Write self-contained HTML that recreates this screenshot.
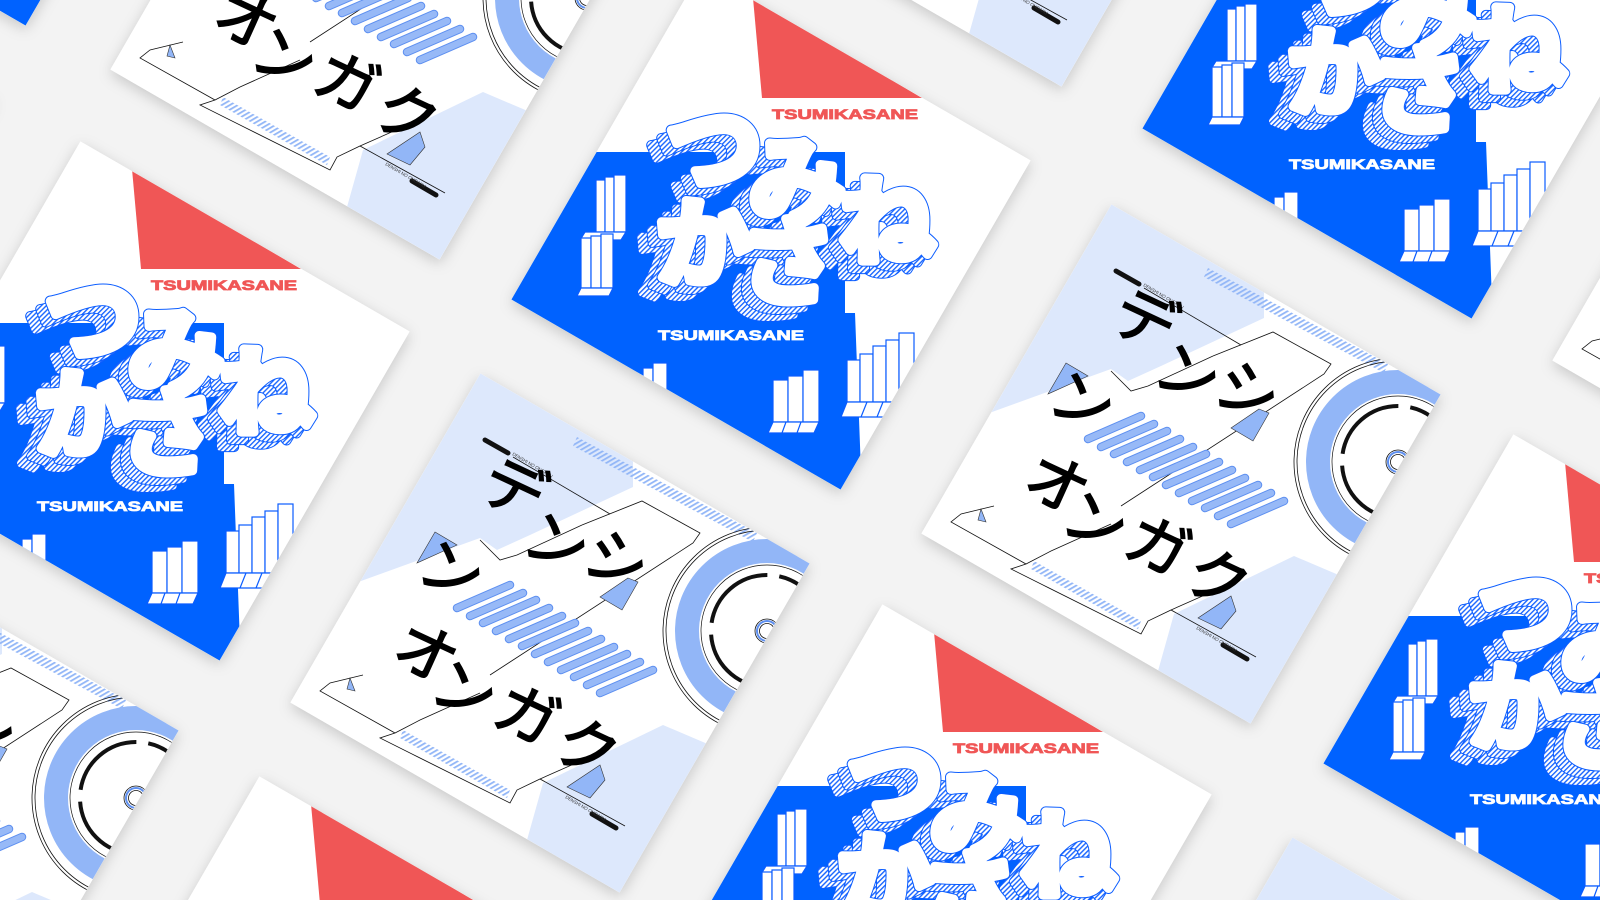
<!DOCTYPE html>
<html><head><meta charset="utf-8">
<style>
html,body{margin:0;padding:0;background:#f3f3f3;width:1600px;height:900px;overflow:hidden;}
svg{display:block;overflow:hidden;}
.jp{font-family:"Noto Sans CJK JP","WenQuanYi Zen Hei",sans-serif;}
.lat{font-family:"Liberation Sans",sans-serif;font-weight:bold;}
</style></head>
<body>
<svg width="1600" height="900" viewBox="0 0 1600 900" xmlns="http://www.w3.org/2000/svg">
<defs>
  <pattern id="hatch" patternUnits="userSpaceOnUse" width="3.5" height="3.5" patternTransform="rotate(45)">
    <rect width="3.5" height="3.5" fill="#fff"/>
    <rect width="1.4" height="3.5" fill="#1a66ff"/>
  </pattern>
  <pattern id="hatchL" patternUnits="userSpaceOnUse" width="4" height="4" patternTransform="rotate(60)">
    <rect width="1.8" height="4" fill="#92b6f7"/>
  </pattern>
  <clipPath id="sq"><rect x="-190" y="-190" width="380" height="380" transform="rotate(30)"/></clipPath>
  <clipPath id="page"><rect width="1600" height="900"/></clipPath>
  <filter id="sh" x="-30%" y="-30%" width="160%" height="160%">
    <feDropShadow dx="0" dy="4" stdDeviation="7" flood-color="#000" flood-opacity="0.18"/>
  </filter>

  <g id="W">
    <text x="-57" y="-47">つ</text><text x="26" y="-14">み</text><text x="116" y="26">ね</text><text x="-67" y="48">か</text><text x="17" y="66">さ</text>
  </g>

  <g id="T">
    <rect x="-300" y="-300" width="600" height="600" fill="#fff"/>
    <polygon points="-18,-232 151,-132 -9,-132" fill="#f05656"/>
    <text x="74" y="-111" class="lat" font-size="14" fill="#f05656" stroke="#f05656" stroke-width="0.8" text-anchor="middle" textLength="146" lengthAdjust="spacingAndGlyphs">TSUMIKASANE</text>
    <polygon points="-400,-78 74,-78 74,83 84,83 96,400 -400,400" fill="#0062ff"/>
    <g fill="#fff" stroke="#0a5cff" stroke-width="1.2">
      <rect x="-175" y="-50" width="9" height="52"/><rect x="-166" y="-53" width="9" height="55"/><rect x="-157" y="-55" width="12" height="57"/>
      <polygon points="-186,2 -145,2 -150,10 -191,10"/>
      <rect x="-190" y="8" width="10" height="50"/><rect x="-180" y="6" width="10" height="52"/><rect x="-170" y="4" width="12" height="54"/>
      <polygon points="-190,58 -158,58 -162,66 -194,66"/>
      <rect x="2" y="150" width="15" height="42"/><rect x="17" y="146" width="15" height="46"/><rect x="32" y="140" width="16" height="52"/>
      <polygon points="2,192 48,192 43,203 -3,203"/>
      <line x1="15" y1="192" x2="11" y2="203"/><line x1="30" y1="192" x2="26" y2="203"/>
      <rect x="76" y="130" width="13" height="42"/><rect x="89" y="124" width="13" height="48"/><rect x="102" y="116" width="13" height="56"/><rect x="115" y="110" width="13" height="62"/><rect x="128" y="103" width="15" height="69"/>
      <polygon points="76,172 143,172 136,187 70,187"/>
      <line x1="96" y1="172" x2="90" y2="187"/><line x1="112" y1="172" x2="106" y2="187"/><line x1="128" y1="172" x2="122" y2="187"/>
      <rect x="-128" y="138" width="10" height="30"/><rect x="-118" y="133" width="14" height="35"/>
    </g>
    <g class="jp" font-size="96" font-weight="700" text-anchor="middle" stroke-linejoin="round">
      <g transform="translate(-20,15)">
        <use href="#W" stroke="#0a5cff" stroke-width="10" fill="#0a5cff"/>
        <use href="#W" stroke="url(#hatch)" stroke-width="8" fill="url(#hatch)"/>
      </g>
      <g transform="translate(-10,8)">
        <use href="#W" stroke="#0a5cff" stroke-width="10" fill="#0a5cff"/>
        <use href="#W" stroke="url(#hatch)" stroke-width="8" fill="url(#hatch)"/>
      </g>
      <use href="#W" stroke="#0a5cff" stroke-width="11" fill="#0a5cff"/>
      <use href="#W" stroke="#fff" stroke-width="9" fill="#fff"/>
    </g>
    <text x="-40" y="110" class="lat" font-size="14" fill="#fff" stroke="#fff" stroke-width="0.8" text-anchor="middle" textLength="146" lengthAdjust="spacingAndGlyphs">TSUMIKASANE</text>
  </g>

  <g id="D">
    <rect x="-300" y="-300" width="600" height="600" fill="#fff"/>
    <polygon points="-80,-300 83,-210 83,-146 -20,-98 -53,-83 -70,-95 -200,-48 -300,-48 -300,-300" fill="#dde8fc"/>
    <polygon points="-7,150 113,92 160,112 300,112 300,300 -30,300 -23,207" fill="#dde8fc"/>
    <polygon points="27,-196 207,-100 203,-91 23,-187" fill="url(#hatchL)"/>
    <polygon points="-147,97 -40,157 -43,165 -150,105" fill="url(#hatchL)"/>
    <g fill="none" stroke="#111" stroke-width="0.8">
      <polyline points="-37,-176 60,-119"/>
      <polyline points="32,-108 92,-132 150,-100 143,-90 -60,42"/>
      <polyline points="-70,-93 -50,-73 -33,-78 32,-108"/>
      <polyline points="-187,42 -220,50 -230,58 -155,100 -130,87 -70,60"/>
      <polyline points="-155,100 -170,105 -40,170 -33,157 -10,146 75,193"/>
      <polyline points="-10,146 60,115"/>
    </g>
    <g stroke-linecap="round">
      <g stroke="#5d8ff0" stroke-width="8.5">
        <line x1="-93" y1="-25" x2="-40" y2="-48"/><line x1="-80" y1="-17" x2="-27" y2="-40"/><line x1="-67" y1="-10" x2="-14" y2="-33"/><line x1="-54" y1="-2" x2="-1" y2="-25"/><line x1="-41" y1="6" x2="12" y2="-17"/><line x1="-28" y1="13" x2="25" y2="-10"/><line x1="-15" y1="21" x2="38" y2="-2"/><line x1="-2" y1="29" x2="51" y2="6"/><line x1="11" y1="37" x2="64" y2="14"/><line x1="24" y1="44" x2="77" y2="21"/><line x1="37" y1="52" x2="90" y2="29"/><line x1="50" y1="60" x2="103" y2="37"/>
      </g>
      <g stroke="#97b9f7" stroke-width="6.5">
        <line x1="-93" y1="-25" x2="-40" y2="-48"/><line x1="-80" y1="-17" x2="-27" y2="-40"/><line x1="-67" y1="-10" x2="-14" y2="-33"/><line x1="-54" y1="-2" x2="-1" y2="-25"/><line x1="-41" y1="6" x2="12" y2="-17"/><line x1="-28" y1="13" x2="25" y2="-10"/><line x1="-15" y1="21" x2="38" y2="-2"/><line x1="-2" y1="29" x2="51" y2="6"/><line x1="11" y1="37" x2="64" y2="14"/><line x1="24" y1="44" x2="77" y2="21"/><line x1="37" y1="52" x2="90" y2="29"/><line x1="50" y1="60" x2="103" y2="37"/>
      </g>
    </g>
    <g fill="#92b6f7" stroke="#333" stroke-width="0.6">
      <polygon points="-115,-101 -93,-88 -133,-70"/>
      <polygon points="78,-55 88,-51 72,-23 50,-36"/>
      <polygon points="50,132 55,147 40,165 17,154"/>
      <polygon points="-200,45 -195,58 -203,56"/>
    </g>
    <g transform="translate(217,-2)" fill="none">
      <circle r="104" stroke="#111" stroke-width="0.8"/>
      <circle r="101" stroke="#111" stroke-width="0.8"/>
      <circle r="80" stroke="#92b6f7" stroke-width="24"/>
      <circle r="66" stroke="#111" stroke-width="0.7"/>
      <circle r="56" stroke="#111" stroke-width="4" stroke-dasharray="80 12"/>
      <circle r="12" stroke="#111" stroke-width="0.8"/>
      <circle r="10" stroke="#5d8ff0" stroke-width="2"/>
      <circle r="7.5" stroke="#111" stroke-width="0.8"/>
    </g>
    <g stroke="#111" stroke-width="5" stroke-linecap="round">
      <line x1="-65" y1="-193" x2="-42" y2="-180"/>
      <line x1="42" y1="181" x2="66" y2="195"/>
    </g>
    <text x="-38" y="-178" font-size="4.5" fill="#333" transform="rotate(30 -38 -178)" font-family="Liberation Sans">DENSHI NO ONGAKU</text>
    <text x="15" y="165" font-size="4.5" fill="#333" transform="rotate(30 15 165)" font-family="Liberation Sans">DENSHI NO ONGAKU</text>
    <g class="jp" font-size="62" font-weight="400" fill="#000" stroke="#000" stroke-width="1.5" text-anchor="middle">
      <text transform="translate(-45,-124) rotate(25)">デ</text>
      <text transform="translate(-3,-70) rotate(25)">ン</text>
      <text transform="translate(57,-52) rotate(25)">シ</text>
      <text transform="translate(-108,-42) rotate(25)">ン</text>
      <text transform="translate(-133,40) rotate(25)">オ</text>
      <text transform="translate(-95,78) rotate(25)">ン</text>
      <text transform="translate(-32,102) rotate(25)">ガ</text>
      <text transform="translate(28,135) rotate(25)">ク</text>
    </g>
  </g>
</defs>

<g clip-path="url(#page)">
<rect width="1600" height="900" fill="#f3f3f3"/>

<g filter="url(#sh)" fill="#fff">
  <rect x="-190" y="-190" width="380" height="380" transform="translate(-44,-234) rotate(30)"/>
  <rect x="-190" y="-190" width="380" height="380" transform="translate(370,0) rotate(30)"/>
  <rect x="-190" y="-190" width="380" height="380" transform="translate(992,-173) rotate(30)"/>
  <rect x="-190" y="-190" width="380" height="380" transform="translate(-265,169) rotate(30)"/>
  <rect x="-190" y="-190" width="380" height="380" transform="translate(771,230) rotate(30)"/>
  <rect x="-190" y="-190" width="380" height="380" transform="translate(1402,59) rotate(30)"/>
  <rect x="-190" y="-190" width="380" height="380" transform="translate(150,401) rotate(30)"/>
  <rect x="-190" y="-190" width="380" height="380" transform="translate(1181,464) rotate(30)"/>
  <rect x="-190" y="-190" width="380" height="380" transform="translate(1812,291) rotate(30)"/>
  <rect x="-190" y="-190" width="380" height="380" transform="translate(550,633) rotate(30)"/>
  <rect x="-190" y="-190" width="380" height="380" transform="translate(1583,694) rotate(30)"/>
  <rect x="-190" y="-190" width="380" height="380" transform="translate(-81,800) rotate(30)"/>
  <rect x="-190" y="-190" width="380" height="380" transform="translate(952,864) rotate(30)"/>
  <rect x="-190" y="-190" width="380" height="380" transform="translate(329,1036) rotate(30)"/>
  <rect x="-190" y="-190" width="380" height="380" transform="translate(1362,1097) rotate(30)"/>
</g>

<g transform="translate(-44,-234)"><g clip-path="url(#sq)"><use href="#T"/></g></g>
<g transform="translate(370,0)"><g clip-path="url(#sq)"><use href="#D"/></g></g>
<g transform="translate(992,-173)"><g clip-path="url(#sq)"><use href="#D"/></g></g>
<g transform="translate(-265,169)"><g clip-path="url(#sq)"><use href="#D"/></g></g>
<g transform="translate(771,230)"><g clip-path="url(#sq)"><use href="#T"/></g></g>
<g transform="translate(1402,59)"><g clip-path="url(#sq)"><use href="#T"/></g></g>
<g transform="translate(150,401)"><g clip-path="url(#sq)"><use href="#T"/></g></g>
<g transform="translate(1181,464)"><g clip-path="url(#sq)"><use href="#D"/></g></g>
<g transform="translate(1812,291)"><g clip-path="url(#sq)"><use href="#D"/></g></g>
<g transform="translate(550,633)"><g clip-path="url(#sq)"><use href="#D"/></g></g>
<g transform="translate(1583,694)"><g clip-path="url(#sq)"><use href="#T"/></g></g>
<g transform="translate(-81,800)"><g clip-path="url(#sq)"><use href="#D"/></g></g>
<g transform="translate(952,864)"><g clip-path="url(#sq)"><use href="#T"/></g></g>
<g transform="translate(329,1036)"><g clip-path="url(#sq)"><use href="#T"/></g></g>
<g transform="translate(1362,1097)"><g clip-path="url(#sq)"><use href="#D"/></g></g>
</g>
</svg>
</body></html>
